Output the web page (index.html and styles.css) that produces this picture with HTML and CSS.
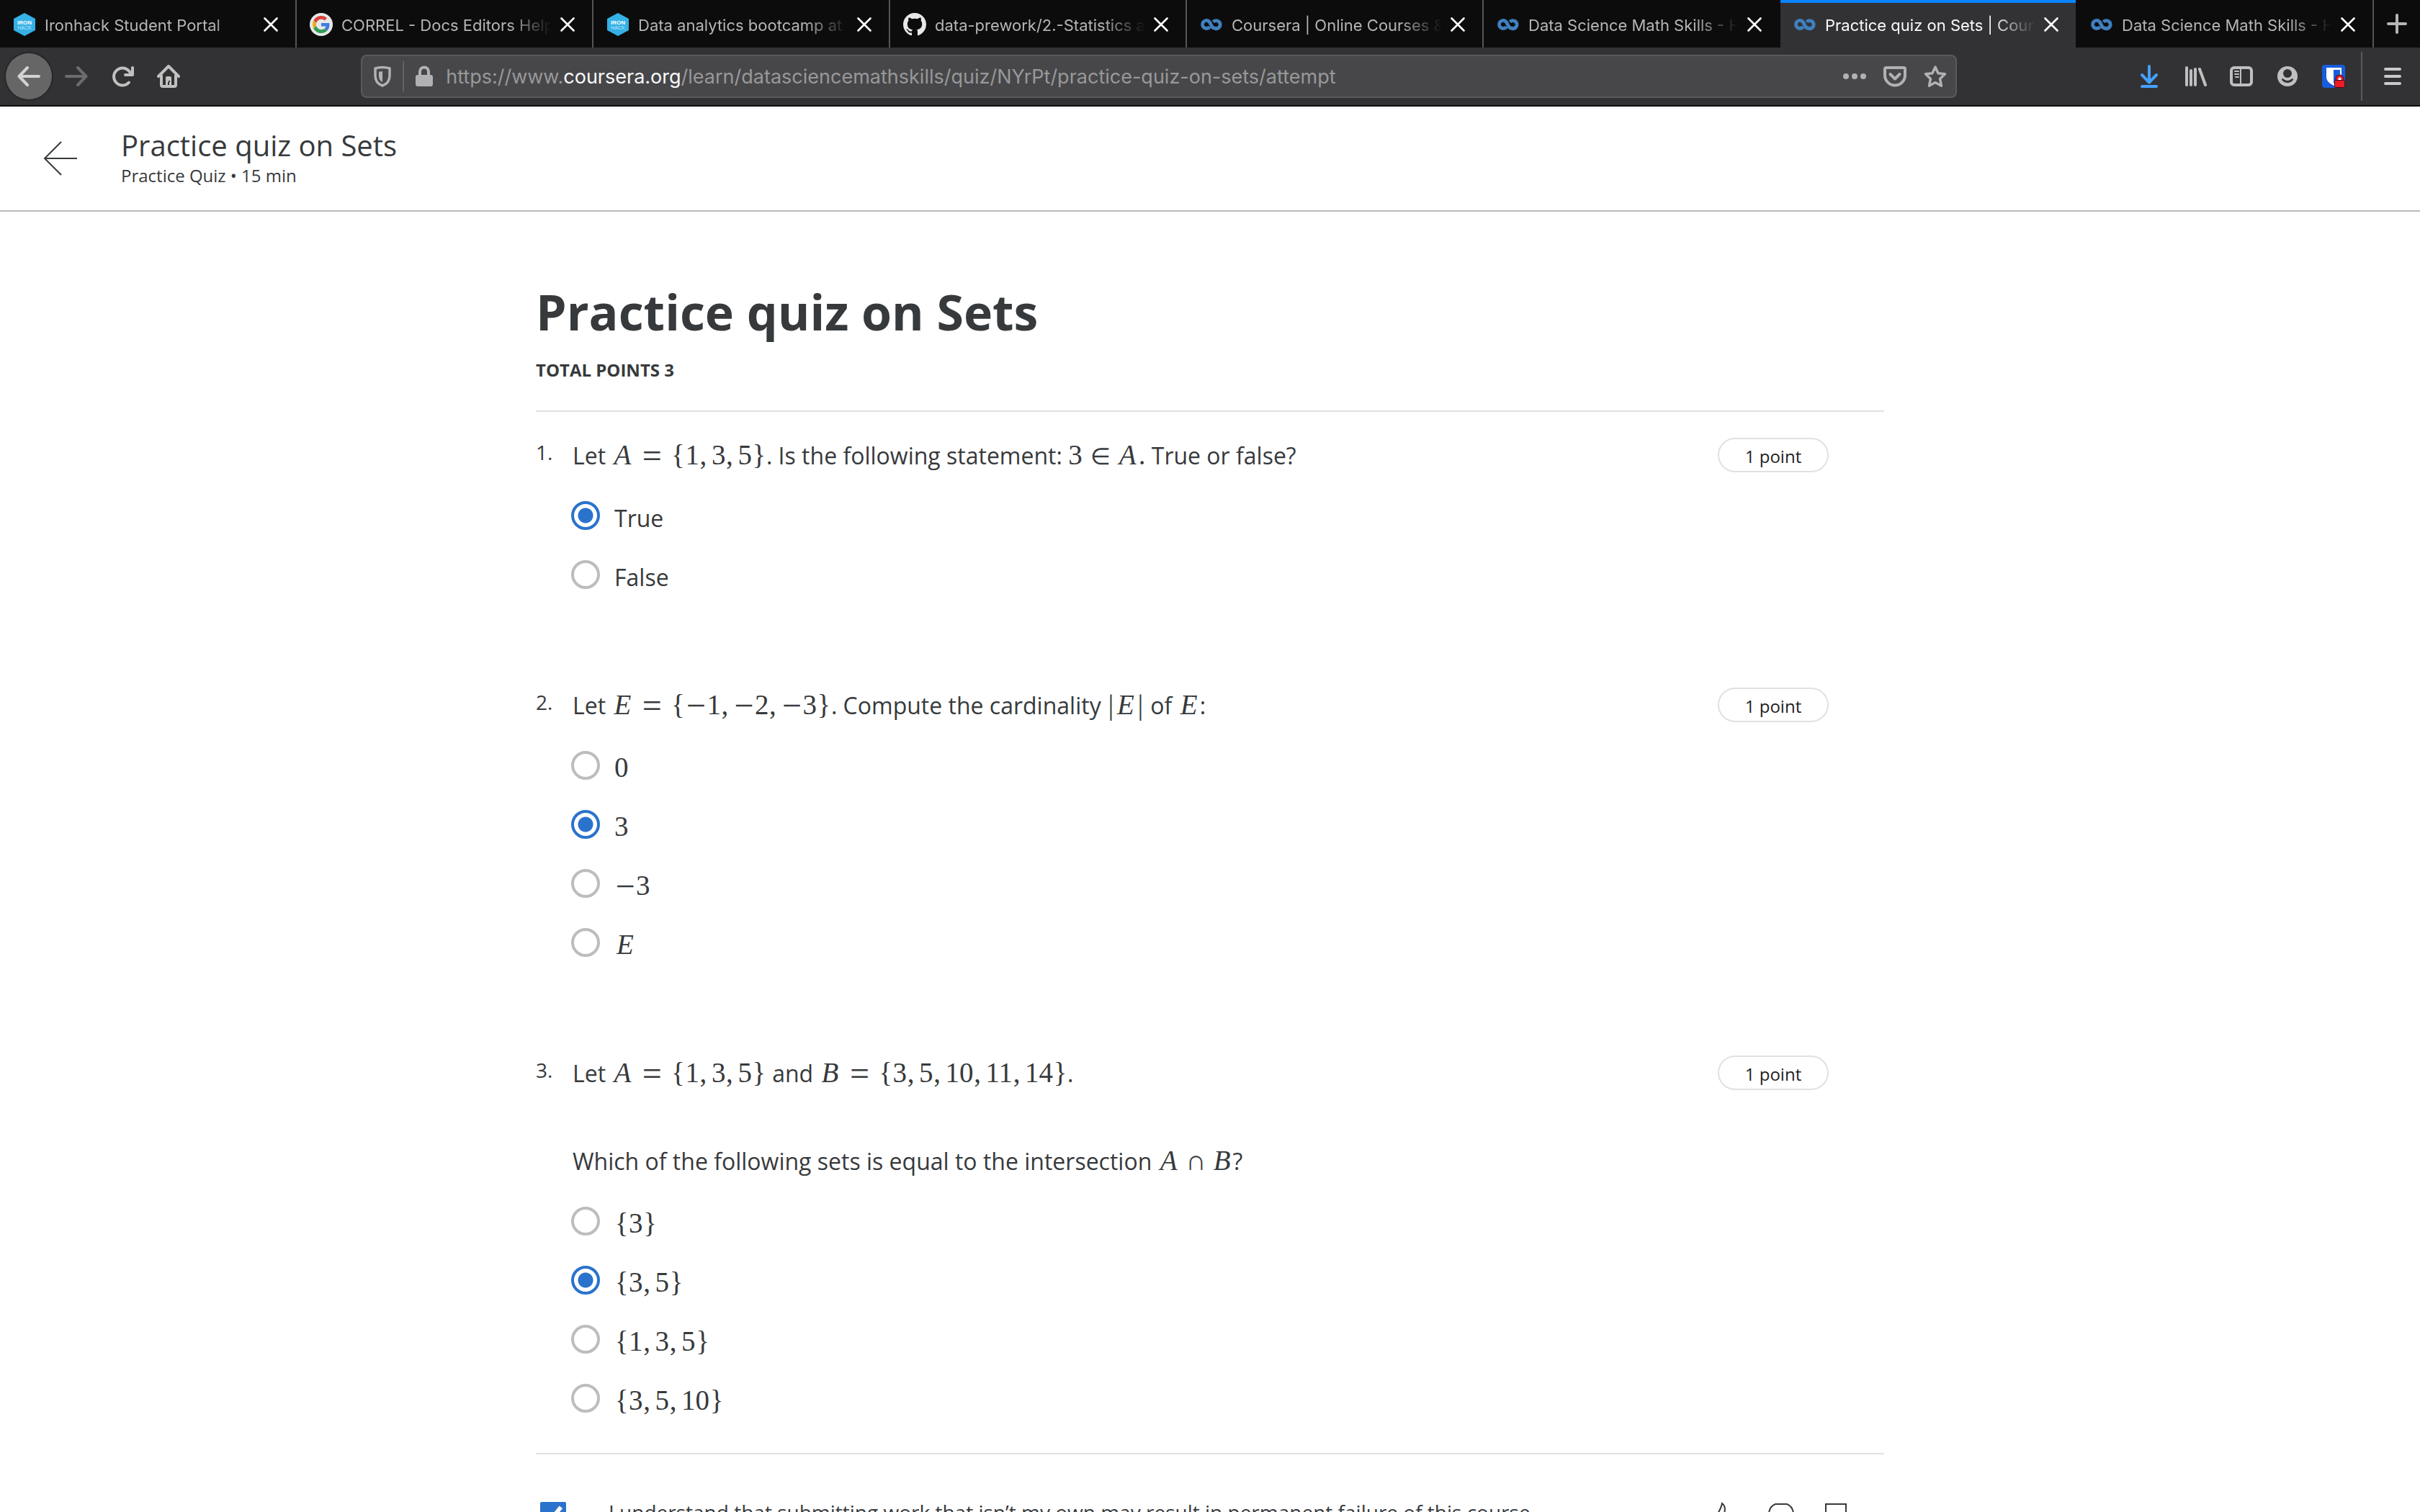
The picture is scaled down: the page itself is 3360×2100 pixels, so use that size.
FILE: index.html
```html
<!DOCTYPE html>
<html lang="en">
<head>
<meta charset="utf-8">
<title>Practice quiz on Sets | Coursera</title>
<link rel="stylesheet" href="styles.css">
</head>
<body>
<svg class="sprite" aria-hidden="true">
  <symbol id="close" viewBox="0 0 20 20"><path d="M1.5 1.5l17 17M18.500 1.500l-17 17" fill="none" stroke="#fff" stroke-width="2.600" stroke-linecap="round"/></symbol>
  <symbol id="ironhack" viewBox="0 0 32 32"><path d="M16 0l15 8v16l-15 8-15-8V8z" fill="#35b1e6"/><text x="16" y="16" text-anchor="middle" font-family="Liberation Sans, sans-serif" font-weight="bold" font-size="8" fill="#fff">IRON</text><text x="16" y="23" text-anchor="middle" font-family="Liberation Sans, sans-serif" font-size="7" fill="#bfe6f8">HACK</text></symbol>
  <symbol id="coursera" viewBox="0 0 32 32"><path d="M13.500 19.200A5.500 5.500 0 1 1 12 11.300C16 14 15 20.500 20 21A5.500 5.500 0 1 0 18.500 12.500" fill="none" stroke="#3f7fbd" stroke-width="5"/></symbol>
</svg>
<div class="browser">
  <nav class="tabs" aria-label="Tabs">
    <div class="tab"><svg class="favicon"><use href="#ironhack"/></svg><a class="tab-title" href="#">Ironhack Student Portal</a><button class="tab-close" aria-label="Close tab"><svg><use href="#close"/></svg></button></div>
    <div class="tab"><svg class="favicon" viewBox="0 0 32 32"><circle cx="16" cy="16" r="16" fill="#e8e8e8"/><g transform="translate(4 4) scale(.5)"><path fill="#d8433a" d="M24 9.500c3.540 0 6.710 1.220 9.210 3.600l6.850-6.850C35.900 2.380 30.470 0 24 0 14.620 0 6.510 5.380 2.560 13.220l7.980 6.190C12.430 13.720 17.740 9.500 24 9.500z"/><path fill="#3f7de0" d="M46.980 24.550c0-1.570-.15-3.090-.38-4.550H24v9.020h12.940c-.58 2.960-2.260 5.480-4.780 7.180l7.730 6c4.510-4.180 7.090-10.360 7.090-17.650z"/><path fill="#e5ae20" d="M10.530 28.590c-.48-1.450-.76-2.990-.76-4.590s.27-3.140.76-4.590l-7.980-6.190C.92 16.460 0 20.120 0 24c0 3.880.92 7.540 2.560 10.780l7.970-6.190z"/><path fill="#329c50" d="M24 48c6.480 0 11.930-2.130 15.890-5.810l-7.730-6c-2.150 1.450-4.920 2.300-8.160 2.300-6.260 0-11.570-4.220-13.470-9.910l-7.980 6.190C6.510 42.620 14.620 48 24 48z"/></g></svg><a class="tab-title" href="#">CORREL - Docs Editors Help</a><button class="tab-close" aria-label="Close tab"><svg><use href="#close"/></svg></button></div>
    <div class="tab"><svg class="favicon"><use href="#ironhack"/></svg><a class="tab-title" href="#">Data analytics bootcamp at Ironhack</a><button class="tab-close" aria-label="Close tab"><svg><use href="#close"/></svg></button></div>
    <div class="tab"><svg class="favicon" viewBox="0 0 16 16"><path fill="#e8e8e8" d="M8 0C3.580 0 0 3.580 0 8c0 3.540 2.290 6.530 5.470 7.590.4.07.55-.17.55-.38 0-.19-.01-.82-.01-1.490-2.010.37-2.530-.49-2.690-.94-.09-.23-.48-.94-.82-1.130-.28-.15-.68-.52-.01-.53.63-.01 1.080.58 1.230.82.72 1.210 1.870.87 2.330.66.07-.52.28-.87.51-1.070-1.780-.2-3.640-.89-3.640-3.950 0-.87.31-1.590.82-2.150-.08-.2-.36-1.020.08-2.120 0 0 .67-.21 2.200.82.64-.18 1.320-.27 2-.27.68 0 1.360.09 2 .27 1.530-1.040 2.200-.82 2.200-.82.44 1.100.16 1.920.08 2.120.51.56.82 1.270.82 2.150 0 3.070-1.870 3.750-3.650 3.950.29.25.54.73.54 1.480 0 1.070-.01 1.930-.01 2.200 0 .21.15.46.55.38A8.013 8.013 0 0 0 16 8c0-4.420-3.580-8-8-8z"/></svg><a class="tab-title" href="#">data-prework/2.-Statistics at master</a><button class="tab-close" aria-label="Close tab"><svg><use href="#close"/></svg></button></div>
    <div class="tab"><svg class="favicon"><use href="#coursera"/></svg><a class="tab-title" href="#">Coursera | Online Courses &amp; Credentials</a><button class="tab-close" aria-label="Close tab"><svg><use href="#close"/></svg></button></div>
    <div class="tab"><svg class="favicon"><use href="#coursera"/></svg><a class="tab-title" href="#">Data Science Math Skills - Home</a><button class="tab-close" aria-label="Close tab"><svg><use href="#close"/></svg></button></div>
    <div class="tab active"><svg class="favicon"><use href="#coursera"/></svg><a class="tab-title" href="#" aria-current="page">Practice quiz on Sets | Coursera</a><button class="tab-close" aria-label="Close tab"><svg><use href="#close"/></svg></button></div>
    <div class="tab"><svg class="favicon"><use href="#coursera"/></svg><a class="tab-title" href="#">Data Science Math Skills - Home</a><button class="tab-close" aria-label="Close tab"><svg><use href="#close"/></svg></button></div>
    <button class="new-tab" aria-label="New tab"><svg viewBox="0 0 28 28"><path d="M14 2v24M2 14h24" stroke="#b5b5b6" stroke-width="4" stroke-linecap="round"/></svg></button>
  </nav>

  <div class="toolbar">
    <button class="tool back" aria-label="Back"><svg class="icon" viewBox="0 0 32 32"><path d="M30 16H3M14 4L2.500 16 14 28" fill="none" stroke="#d2d2d2" stroke-width="4" stroke-linecap="round" stroke-linejoin="round"/></svg></button>
    <button class="tool" aria-label="Forward"><svg class="icon" viewBox="0 0 32 32"><path d="M2 16h27M18 4l11.500 12L18 28" fill="none" stroke="#6c6c6e" stroke-width="4" stroke-linecap="round" stroke-linejoin="round"/></svg></button>
    <button class="tool" aria-label="Reload"><svg class="icon" viewBox="0 0 32 32"><path d="M25 24.500A12 12 0 1 1 25 8.500l4 5M30 4v10H20" fill="none" stroke="#c0c0c0" stroke-width="4" stroke-linecap="round" stroke-linejoin="round"/></svg></button>
    <button class="tool" aria-label="Home"><svg class="icon" viewBox="0 0 32 32"><path d="M2 16L16 2l14 14M6 15v13a2 2 0 0 0 2 2h16a2 2 0 0 0 2-2V15" fill="none" stroke="#c0c0c0" stroke-width="4" stroke-linecap="round" stroke-linejoin="round"/><path d="M12 30V18a2 2 0 0 1 2-2h4a2 2 0 0 1 2 2v12h-3v-6h-2v6z" fill="#c0c0c0"/><path d="M16 22h2v2h-2z" fill="#323234"/></svg></button>
    <div class="spring"></div>
    <div class="url-bar">
      <svg class="icon" viewBox="0 0 32 32"><path d="M16 3.500c4 0 7 .5 10 1.500v10c0 7-4 12-10 14-6-2-10-7-10-14V5c3-1 6-1.500 10-1.500z" fill="none" stroke="#b1b1b3" stroke-width="3.500" stroke-linejoin="round"/><path d="M16 9l-5 .7V15c0 5 2 7.500 5 9z" fill="#b1b1b3"/></svg>
      <span class="url-rule"></span>
      <svg class="icon" viewBox="0 0 32 32"><path d="M10 15V9.500a6 6 0 0 1 12 0V15" fill="none" stroke="#b1b1b3" stroke-width="4"/><rect x="4" y="14" width="24" height="16" rx="3" fill="#b1b1b3"/></svg>
      <div class="url" role="textbox" contenteditable="true" spellcheck="false" aria-label="Address">https://www.<b>coursera.org</b>/learn/datasciencemathskills/quiz/NYrPt/practice-quiz-on-sets/attempt</div>
      <button class="url-action" aria-label="Page actions"><svg class="icon" viewBox="0 0 32 32"><g fill="#b1b1b3"><circle cx="4" cy="16" r="4"/><circle cx="16" cy="16" r="4"/><circle cx="28" cy="16" r="4"/></g></svg></button>
      <button class="url-action" aria-label="Save to Pocket"><svg class="icon" viewBox="0 0 32 32"><path d="M4 4h24a2 2 0 0 1 2 2v8.500a14 14 0 0 1-28 0V6a2 2 0 0 1 2-2z" fill="none" stroke="#b1b1b3" stroke-width="4"/><path d="M9.500 13l6.500 6.500 6.500-6.500" fill="none" stroke="#b1b1b3" stroke-width="4" stroke-linecap="round" stroke-linejoin="round"/></svg></button>
      <button class="url-action" aria-label="Bookmark this page"><svg class="icon" viewBox="0 0 32 32"><path d="M16 3l4 8.800 9.500 1-7 6.600 2 9.800L16 24.500l-8.500 4.700 2-9.800-7-6.600 9.500-1z" fill="none" stroke="#b1b1b3" stroke-width="3.500" stroke-linejoin="round"/></svg></button>
    </div>
    <div class="spring"></div>
    <button class="tool" aria-label="Downloads"><svg class="icon" viewBox="0 0 32 32"><path d="M16 2v22M6 14l10 10.500L26 14M6 30h20" fill="none" stroke="#45a1ff" stroke-width="4" stroke-linecap="round" stroke-linejoin="round"/></svg></button>
    <button class="tool" aria-label="Library"><svg class="icon" viewBox="0 0 32 32"><path d="M4 4v24M10 8v20M16 6v22M22 6l8 22" fill="none" stroke="#bfbfc0" stroke-width="4" stroke-linecap="round"/></svg></button>
    <button class="tool" aria-label="Sidebars"><svg class="icon" viewBox="0 0 32 32"><rect x="2" y="4" width="28" height="24" rx="4" fill="none" stroke="#bfbfc0" stroke-width="4"/><path d="M15 5v22M7 9h5M7 13h5M8 17h4" stroke="#bfbfc0" stroke-width="2" stroke-linecap="round"/></svg></button>
    <button class="tool" aria-label="Account"><svg class="icon" viewBox="0 0 32 32"><circle cx="16" cy="16" r="14" fill="#bfbfc0"/><circle cx="16" cy="12" r="6" fill="#323234"/><path d="M9 19c1.500 0 3 3 7 3s5.500-3 7-3c2.500 0 0 6-7 6s-9.500-6-7-6z" fill="#323234"/></svg></button>
    <button class="tool" aria-label="Bitwarden"><svg class="icon" viewBox="0 0 32 32"><rect width="32" height="32" rx="4" fill="#175ddc"/><path d="M6 4h21v13c0 5-4 9-10.500 12C10 26 6 22 6 17z" fill="#fff"/><path d="M16 7h9v10c0 4-3 6-9 9z" fill="#175ddc"/><path d="M21 22v-2.500a3.500 3.500 0 0 1 7 0V22" fill="#fff" stroke="#3a1020" stroke-width="5"/><path d="M21 22v-2.500a3.500 3.500 0 0 1 7 0V22" fill="#fff" stroke="#ee1c24" stroke-width="3"/><rect x="17.500" y="21.500" width="14" height="10" rx="1" fill="#ee1c24" stroke="#3a1020"/></svg></button>
    <span class="tool-rule"></span>
    <button class="tool" aria-label="Menu"><svg class="icon" viewBox="0 0 32 32"><path d="M6 6h20M6 16h20M6 26h20" stroke="#cacacb" stroke-width="4" stroke-linecap="round"/></svg></button>
  </div>

  <div class="page">
    <header class="page-head">
      <a class="leave" href="#" aria-label="Back to course"><svg viewBox="0 0 48 48"><path d="M47 24H2M25 1L2 24l23 23" fill="none" stroke="#373a3c" stroke-width="2"/></svg></a>
      <div>
        <div class="head-title">Practice quiz on Sets</div>
        <div class="head-sub">Practice Quiz • 15 min</div>
      </div>
    </header>

    <main class="quiz">
      <h1>Practice quiz on Sets</h1>
      <p class="total">TOTAL POINTS 3</p>

      <form class="questions">
        <section class="question">
          <div class="number">1.</div>
          <div class="body">
            <p class="prompt">Let <span class="math"><i class="v">A</i><span class="rel">=</span><span class="br">{</span>1<span class="cm">,</span>3<span class="cm">,</span>5<span class="br">}</span></span>. Is the following statement: <span class="math">3<span class="in">∈</span><i class="v">A</i>.</span> True or false?</p>
            <div class="options">
              <label class="option"><input type="radio" name="q1" checked><span>True</span></label>
              <label class="option"><input type="radio" name="q1"><span>False</span></label>
            </div>
          </div>
          <div class="points">1 point</div>
        </section>

        <section class="question">
          <div class="number">2.</div>
          <div class="body">
            <p class="prompt">Let <span class="math"><i class="v">E</i><span class="rel">=</span><span class="br">{</span><span class="neg">−</span>1<span class="cm">,</span><span class="neg">−</span>2<span class="cm">,</span><span class="neg">−</span>3<span class="br">}</span></span>. Compute the cardinality <span class="math"><span class="bar">|</span><i class="v">E</i><span class="bar">|</span></span> of <span class="math"><i class="v">E</i></span>:</p>
            <div class="options">
              <label class="option"><input type="radio" name="q2"><span class="math">0</span></label>
              <label class="option"><input type="radio" name="q2" checked><span class="math">3</span></label>
              <label class="option"><input type="radio" name="q2"><span class="math"><span class="neg">−</span>3</span></label>
              <label class="option"><input type="radio" name="q2"><span class="math"><i class="v">E</i></span></label>
            </div>
          </div>
          <div class="points">1 point</div>
        </section>

        <section class="question">
          <div class="number">3.</div>
          <div class="body">
            <p class="prompt">Let <span class="math"><i class="v">A</i><span class="rel">=</span><span class="br">{</span>1<span class="cm">,</span>3<span class="cm">,</span>5<span class="br">}</span></span> and <span class="math"><i class="v">B</i><span class="rel">=</span><span class="br">{</span>3<span class="cm">,</span>5<span class="cm">,</span>10<span class="cm">,</span>11<span class="cm">,</span>14<span class="br">}</span></span>.</p>
            <p class="prompt ask">Which of the following sets is equal to the intersection <span class="math"><i class="v">A</i><span class="cap">∩</span><i class="v">B</i></span>?</p>
            <div class="options">
              <label class="option"><input type="radio" name="q3"><span class="math"><span class="br">{</span>3<span class="br">}</span></span></label>
              <label class="option"><input type="radio" name="q3" checked><span class="math"><span class="br">{</span>3<span class="cm">,</span>5<span class="br">}</span></span></label>
              <label class="option"><input type="radio" name="q3"><span class="math"><span class="br">{</span>1<span class="cm">,</span>3<span class="cm">,</span>5<span class="br">}</span></span></label>
              <label class="option"><input type="radio" name="q3"><span class="math"><span class="br">{</span>3<span class="cm">,</span>5<span class="cm">,</span>10<span class="br">}</span></span></label>
            </div>
          </div>
          <div class="points">1 point</div>
        </section>

        <div class="honor">
          <label class="agree"><input type="checkbox" checked><span>I understand that submitting work that isn’t my own may result in permanent failure of this course</span></label>
          <div class="feedback">
            <button type="button" aria-label="Like"><svg viewBox="0 0 36 36"><path d="M1 18h4c3-5 6-10 7-16 4 3 5 7 3 14h16l-3 18H10l-5-3H1" fill="none" stroke="#373a3c" stroke-width="2"/></svg></button>
            <button type="button" aria-label="Dislike"><svg viewBox="0 0 36 36"><path d="M10 3h16c5 2 8 6 9 12v7c-1 6-4 10-9 12H10c-5-2-8-6-9-12v-7C2 9 5 5 10 3z" fill="none" stroke="#373a3c" stroke-width="2"/></svg></button>
            <button type="button" aria-label="Report a problem"><svg viewBox="0 0 36 36"><path d="M4 36V3h28v21H4" fill="none" stroke="#373a3c" stroke-width="2"/></svg></button>
          </div>
        </div>
      </form>
    </main>
  </div>
</div>
</body>
</html>
```
FILE: styles.css
```css
* { box-sizing: border-box; }
body { margin: 0; background: #fff; color: #373a3c; font-family: "Open Sans", "Noto Sans", sans-serif; }
p, h1 { margin: 0; }
button { padding: 0; border: 0; background: none; }
svg { display: block; }
.sprite { position: absolute; width: 0; height: 0; }
.browser { display: flex; flex-direction: column; height: 100vh; overflow: hidden; }

/* Tab strip */
.tabs { display: flex; flex: none; height: 66px; background: #0c0c0d; font-family: Inter, "Liberation Sans", sans-serif; }
.tab { display: flex; flex: 1; align-items: center; min-width: 0; padding: 2px 24px 0 18px; border-right: 2px solid #555557; }
.tab:has(+ .active), .tab.active { border-right-color: transparent; }
.tab.active { background: #323234; background-clip: padding-box; box-shadow: inset 0 4px #0a84ff; }
.favicon { flex: none; width: 32px; height: 32px; margin-right: 12px; }
.tab-title { flex: 1; min-width: 0; margin-right: 12px; padding-top: 2px; overflow: hidden; color: #b5b5b6; font-size: 22px; line-height: 32px; text-decoration: none; white-space: nowrap; mask-image: linear-gradient(to left, transparent, #000 60px); }
.active .tab-title { color: #f9f9fa; }
.tab-close, .tab-close svg { flex: none; width: 20px; height: 20px; }
.new-tab { display: flex; flex: none; align-items: center; justify-content: center; width: 64px; }
.new-tab svg { width: 28px; height: 28px; }

/* Navigation bar */
.toolbar { display: flex; flex: none; align-items: center; height: 82px; padding: 0 6px 0 8px; border-bottom: 2px solid #0c0c0d; background: #323234; }
.tool { display: flex; flex: none; align-items: center; justify-content: center; width: 64px; height: 64px; }
.back { margin-right: 2px; border-radius: 50%; background: #666667; box-shadow: 0 0 0 2px #272728; }
.icon { flex: none; width: 32px; height: 32px; }
.spring { flex: none; width: 7vw; }
.url-bar { display: flex; flex: 1; align-items: center; gap: 12px; min-width: 0; height: 60px; padding: 0 12px; border: 2px solid #5a5a5c; border-radius: 8px; background: #474749; }
.url-rule { width: 2px; height: 42px; background: #5f6368; }
.url { flex: 1; min-width: 0; margin-left: 2px; padding-top: 2px; overflow: hidden; color: #98989a; font: 27px/36px Inter, "Liberation Sans", sans-serif; white-space: nowrap; outline: none; }
.url b { color: #f9f9fa; font-weight: 400; }
.url-action + .url-action { margin-left: 12px; }
.tool-rule { width: 2px; height: 68px; margin: 0 10px 0 6px; background: #5a5a5c; }

/* Course header */
.page { flex: 1; min-height: 0; overflow: hidden; }
.page-head { display: flex; align-items: center; gap: 60px; height: 146px; padding: 0 60px; border-bottom: 2px solid #bbb; }
.leave svg { width: 48px; height: 48px; }
.head-title { font-size: 40px; line-height: 48px; }
.head-sub { font-size: 24px; line-height: 36px; }

/* Quiz */
.quiz { max-width: 1872px; margin: 0 auto; padding-top: 99px; }
h1 { font-size: 68px; font-weight: 700; line-height: 80px; }
.total { margin-top: 25px; padding-bottom: 40px; border-bottom: 2px solid #e1e1e1; font-size: 24px; font-weight: 700; line-height: 32px; }
.questions { padding-top: 36px; }
.question { display: grid; grid-template-columns: 49px 1fr auto; align-items: start; padding-right: 77px; }
.question + .question { margin-top: 129px; }
.number { font-size: 28px; line-height: 40px; }
.body { font-size: 32px; line-height: 48px; }
.prompt { padding-left: 2px; line-height: 50px; }
.ask { margin-top: 72px; }
.points { width: 154px; height: 48px; border: 2px solid #e1e1e1; border-radius: 24px; color: #1f1f1f; font-size: 24px; line-height: 48px; text-align: center; }
.options { display: grid; gap: 34px; justify-items: start; margin-top: 38px; }
.option { display: flex; align-items: flex-start; gap: 20px; height: 48px; }
.option input { appearance: none; width: 40px; height: 40px; margin: 0; border: 4px solid #bdbdbd; border-radius: 50%; background: #fff; }
.option input:checked { border-color: #2a73cc; background: radial-gradient(circle, #2a73cc 10px, #fff 11px); }

/* Formulas: the widths follow the usual atom widths of mathematical setting */
.math { font-family: "Liberation Serif", serif; font-size: 39px; line-height: 40px; white-space: nowrap; }
.option .math { line-height: 46px; }
.math span, .v { display: inline-block; line-height: 32px; text-align: center; }
.v { width: 30px; }
.math .rel { width: 30px; margin: 0 11px; font-size: 48px; vertical-align: -4px; }
.math .in { width: 26px; margin: 0 11px; font-family: "DejaVu Sans Light", "DejaVu Sans", sans-serif; font-size: 32px; font-weight: 200; }
.math .cap { width: 26px; margin: 0 9px; }
.math .br { width: 20px; }
.math .cm { width: 11px; margin-right: 6px; }
.math .neg { width: 30px; font-size: 48px; vertical-align: -4px; }
.math .bar { width: 11px; }

/* Honor code */
.honor { display: flex; justify-content: space-between; margin-top: 48px; padding: 66px 49px 66px 6px; border-top: 2px solid #e1e1e1; }
.agree { display: flex; gap: 59px; font-size: 28px; line-height: 28px; }
.agree input { width: 36px; height: 36px; margin: 0; accent-color: #2a73cc; }
.feedback { display: flex; gap: 40px; }
.feedback svg { width: 36px; height: 36px; }
```
